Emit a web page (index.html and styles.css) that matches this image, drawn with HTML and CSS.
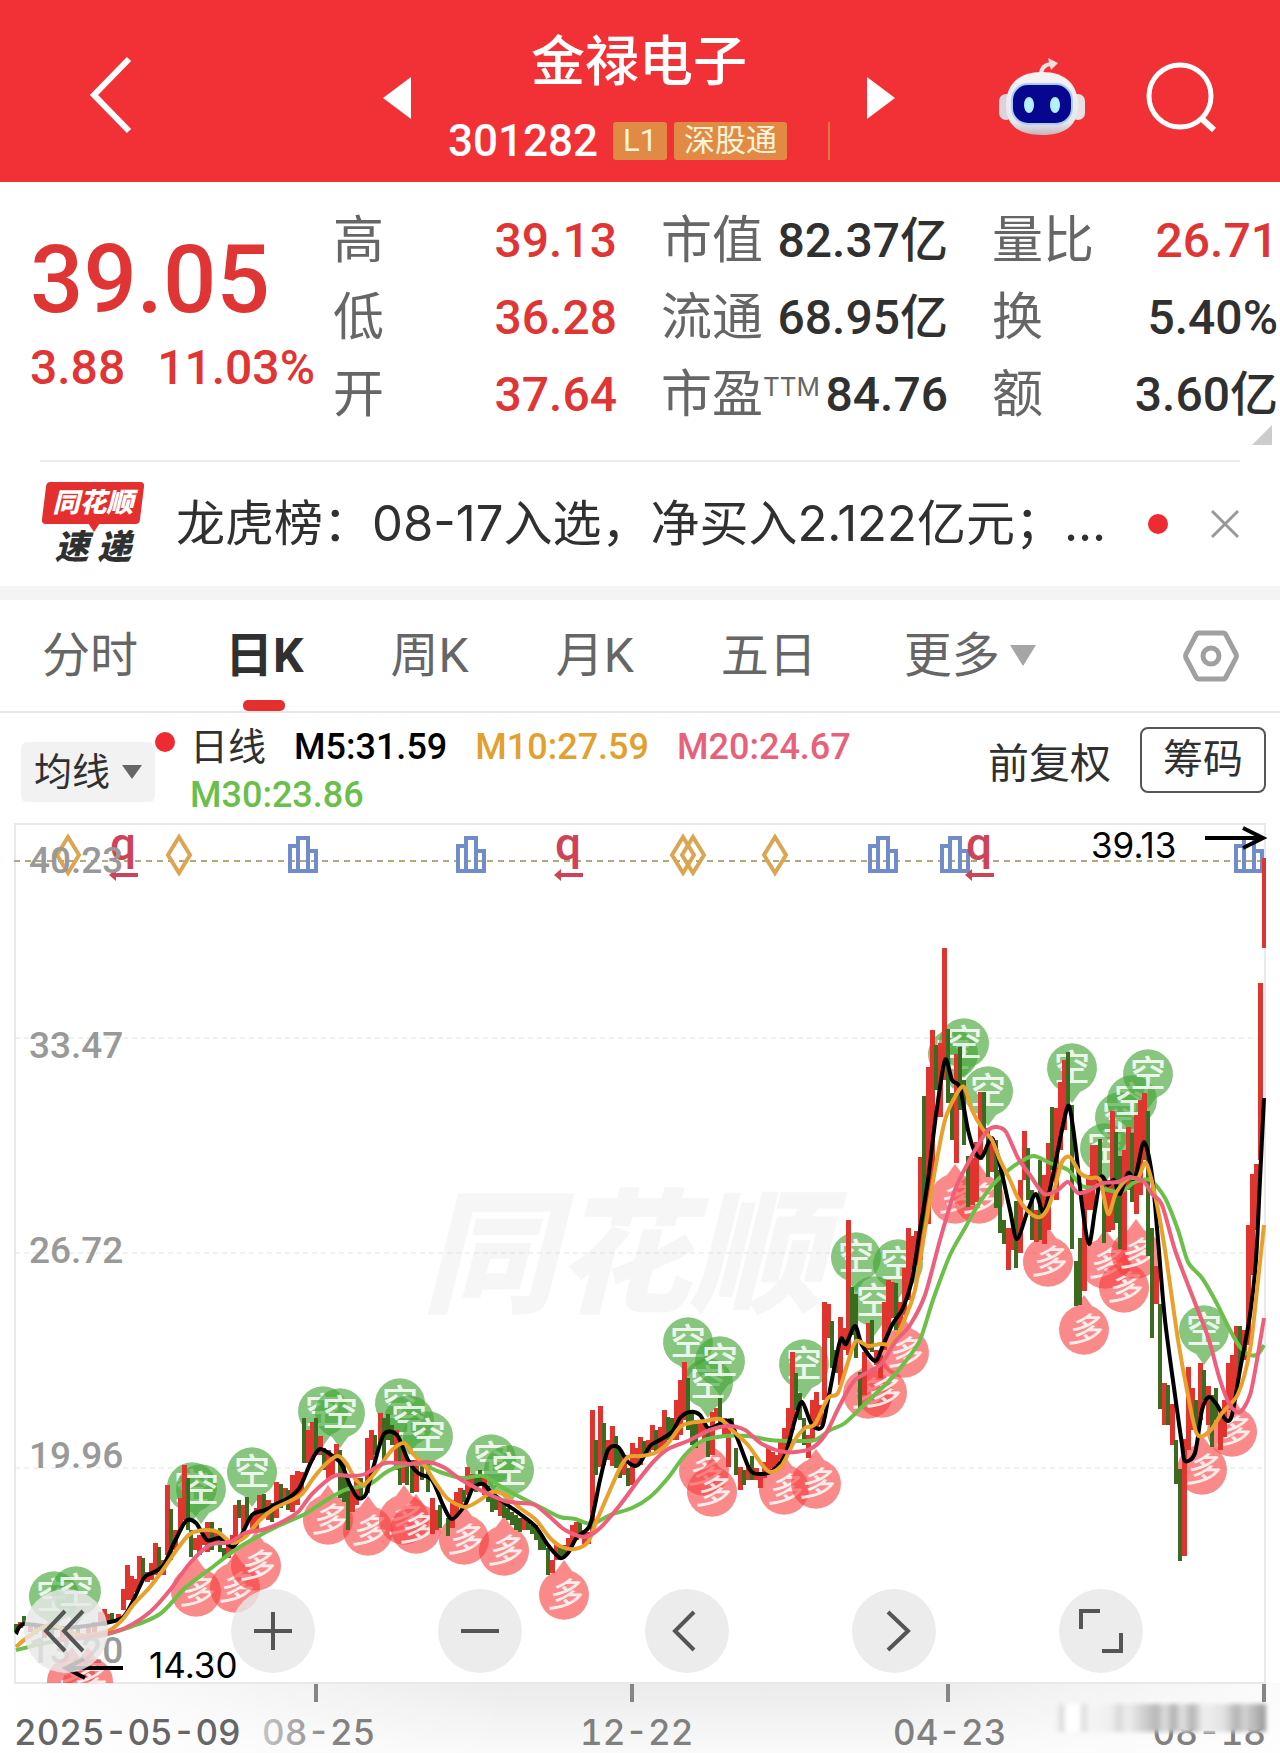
FILE: index.html
```html
<!DOCTYPE html>
<html lang="zh-CN">
<head>
    <meta charset="UTF-8">
    <meta name="viewport" content="width=device-width, initial-scale=1.0">
    <title>金禄电子 301282</title>
    <link rel="stylesheet" href="styles.css">
</head>
<body>

    <header class="top-bar">
        <button type="button" class="icon-btn back" aria-label="返回">
            <svg width="46" height="80" viewBox="0 0 46 80"><path d="M43 4 L8 40 L43 76" fill="none" stroke="#fff" stroke-width="6"/></svg>
        </button>
        <div class="stock">
            <button type="button" class="icon-btn" aria-label="上一只">
                <svg width="28" height="42" viewBox="0 0 28 42"><path d="M28 0 V42 L0 21 Z" fill="#fff"/></svg>
            </button>
            <div class="stock-info">
                <h1>金禄电子</h1>
                <div class="stock-code">
                    <span class="code">301282</span>
                    <span class="tag">L1</span>
                    <span class="tag">深股通</span>
                    <span class="tag-cut"></span>
                </div>
            </div>
            <button type="button" class="icon-btn" aria-label="下一只">
                <svg width="28" height="42" viewBox="0 0 28 42"><path d="M0 0 V42 L28 21 Z" fill="#fff"/></svg>
            </button>
        </div>
        <div class="tools">
            <button type="button" class="icon-btn" aria-label="助手">
                <svg width="88" height="80" viewBox="0 0 88 80">
                    <defs>
                        <linearGradient id="shell" x1="0" y1="0" x2="0" y2="1">
                            <stop offset="0" stop-color="#f6f3f3"/>
                            <stop offset="0.8" stop-color="#e6e8ec"/>
                            <stop offset="1" stop-color="#c4b4bc"/>
                        </linearGradient>
                    </defs>
                    <path d="M43 18 Q43 8 53 7" fill="none" stroke="#f6dede" stroke-width="4"/>
                    <path d="M50 1 L60 6 L53 13 Z" fill="#f6dede"/>
                    <rect x="1" y="37" width="14" height="26" rx="7" fill="#d9d4dc"/>
                    <rect x="73" y="37" width="14" height="26" rx="7" fill="#e9e0e4"/>
                    <path d="M44 15 C68 15 80 28 80 48 C80 68 68 78 44 78 C20 78 8 68 8 48 C8 28 20 15 44 15 Z" fill="url(#shell)"/>
                    <rect x="13" y="26" width="62" height="42" rx="17" fill="#a9cdf6"/>
                    <rect x="15" y="28" width="58" height="38" rx="15" fill="#06068f"/>
                    <ellipse cx="31" cy="48" rx="5" ry="8" fill="#b5f0ff"/>
                    <ellipse cx="57" cy="48" rx="5" ry="8" fill="#b5f0ff"/>
                </svg>
            </button>
            <button type="button" class="icon-btn" aria-label="搜索">
                <svg width="72" height="72" viewBox="0 0 72 72"><g fill="none" stroke="#fff" stroke-width="5"><circle cx="34" cy="35" r="31"/><path d="M55 57 L68 69" stroke-width="6"/></g></svg>
            </button>
        </div>
    </header>

    <section class="quote">
        <div class="price up">
            <div class="price-now">39.05</div>
            <div class="price-change"><span>3.88</span><span>11.03%</span></div>
        </div>
        <dl class="stats">
            <div><dt>高</dt><dd class="up">39.13</dd></div>
            <div><dt>低</dt><dd class="up">36.28</dd></div>
            <div><dt>开</dt><dd class="up">37.64</dd></div>
        </dl>
        <dl class="stats">
            <div><dt>市值</dt><dd>82.37亿</dd></div>
            <div><dt>流通</dt><dd>68.95亿</dd></div>
            <div><dt>市盈<sup>TTM</sup></dt><dd>84.76</dd></div>
        </dl>
        <dl class="stats">
            <div><dt>量比</dt><dd class="up">26.71</dd></div>
            <div><dt>换</dt><dd>5.40%</dd></div>
            <div><dt>额</dt><dd>3.60亿</dd></div>
        </dl>
        <span class="corner"></span>
    </section>

    <section class="news">
        <div class="news-logo">
            <span class="logo-top">同花顺</span>
            <span class="logo-bottom">速 递</span>
        </div>
        <a href="#" class="news-text">龙虎榜：08-17入选，净买入2.122亿元；...</a>
        <span class="dot"></span>
        <button type="button" class="icon-btn" aria-label="关闭">
            <svg width="30" height="30" viewBox="0 0 30 30"><path d="M2 2 L28 28 M28 2 L2 28" stroke="#999" stroke-width="3"/></svg>
        </button>
    </section>

    <nav class="tabs">
        <button type="button">分时</button>
        <button type="button" class="active">日K</button>
        <button type="button">周K</button>
        <button type="button">月K</button>
        <button type="button">五日</button>
        <button type="button" class="more">更多<span class="caret"></span></button>
        <button type="button" class="settings" aria-label="设置">
            <svg width="58" height="54" viewBox="0 0 58 54"><g fill="none" stroke="#a0a0a0" stroke-width="5"><path d="M17 4 H41 Q43 4 44 6 L54 25 Q55 27 54 29 L44 48 Q43 50 41 50 H17 Q15 50 14 48 L4 29 Q3 27 4 25 L14 6 Q15 4 17 4 Z"/><circle cx="29" cy="27" r="8"/></g></svg>
        </button>
    </nav>

    <section class="indicators">
        <button type="button" class="ma-btn">均线<span class="caret dark"></span><span class="dot"></span></button>
        <div class="ma-list">
            <span class="ma-name">日线</span>
            <span class="m5">M5:31.59</span>
            <span class="m10">M10:27.59</span>
            <span class="m20">M20:24.67</span>
            <span class="m30">M30:23.86</span>
        </div>
        <button type="button" class="adjust">前复权</button>
        <button type="button" class="chips">筹码</button>
    </section>

    <main class="chart-box">
        <svg id="chart" viewBox="0 820 1280 933" role="img" aria-label="日K线图">
            <defs>
                <linearGradient id="axisBg" x1="0" y1="0" x2="0" y2="1">
                    <stop offset="0" stop-color="#ebebeb"/>
                    <stop offset="1" stop-color="#fafafa"/>
                </linearGradient>
                <linearGradient id="axisFade" x1="0" y1="0" x2="1" y2="0">
                    <stop offset="0" stop-color="#fff"/>
                    <stop offset="0.4" stop-color="#fff" stop-opacity="0"/>
                    <stop offset="0.7" stop-color="#fff" stop-opacity="0"/>
                    <stop offset="1" stop-color="#fff" stop-opacity="0.8"/>
                </linearGradient>
                <linearGradient id="dateFade" x1="0" y1="0" x2="1" y2="0">
                    <stop offset="0" stop-color="#c4c4c4"/>
                    <stop offset="0.7" stop-color="#808080"/>
                </linearGradient>
                <linearGradient id="smear" x1="0" y1="0" x2="1" y2="0">
                    <stop offset="0" stop-color="#f6f6f6"/>
                    <stop offset="0.03" stop-color="#d8d8d8"/>
                    <stop offset="0.05" stop-color="#fff"/>
                    <stop offset="0.11" stop-color="#fff"/>
                    <stop offset="0.13" stop-color="#dadada"/>
                    <stop offset="0.16" stop-color="#f4f4f4"/>
                    <stop offset="0.26" stop-color="#f0f0f0"/>
                    <stop offset="0.3" stop-color="#d8d8d8"/>
                    <stop offset="0.34" stop-color="#eee"/>
                    <stop offset="0.48" stop-color="#b8b8b8"/>
                    <stop offset="0.52" stop-color="#dedede"/>
                    <stop offset="0.56" stop-color="#b0b0b0"/>
                    <stop offset="0.6" stop-color="#e2e2e2"/>
                    <stop offset="0.65" stop-color="#b4b4b4"/>
                    <stop offset="0.7" stop-color="#efefef"/>
                    <stop offset="0.8" stop-color="#e2e2e2"/>
                    <stop offset="0.86" stop-color="#b4b4b4"/>
                    <stop offset="0.9" stop-color="#d2d2d2"/>
                    <stop offset="1" stop-color="#999"/>
                </linearGradient>
                <filter id="soft"><feGaussianBlur stdDeviation="2"/></filter>
                <clipPath id="plot"><rect x="14" y="824" width="1252" height="859"/></clipPath>
            </defs>

            <text class="watermark" x="422" y="1302">同花顺</text>
            <rect x="0" y="1683" width="1280" height="70" fill="url(#axisBg)"/>
            <rect x="0" y="1683" width="1280" height="70" fill="url(#axisFade)"/>
            <path d="M15 1683 V824 H1265 V1683 Z" fill="none" stroke="#e9e9e9" stroke-width="2"/>
            <path d="M15 1038 H1265 M15 1253 H1265 M15 1468 H1265" stroke="#e2e2e2" stroke-width="1" stroke-dasharray="5 4"/>
            <path d="M14 861 H1265" stroke="#b3a878" stroke-width="2" stroke-dasharray="6 5"/>

            <g id="events"></g>
            <g class="scale">
                <text x="29" y="873">40.23</text>
                <text x="29" y="1058">33.47</text>
                <text x="29" y="1263">26.72</text>
                <text x="29" y="1468">19.96</text>
                <text x="29" y="1663">13.20</text>
            </g>
            <g clip-path="url(#plot)">
                <g id="marks"></g>
                <g id="candles"></g>
                <g id="lines"></g>
            </g>

            <g class="extreme">
                <text x="1091" y="858">39.13</text>
                <path d="M1205 838 H1263 M1243 828 L1263 838 L1243 848"/>
                <text x="149" y="1678">14.30</text>
                <path d="M123 1668 H66 M84 1659 L66 1668 L85 1678"/>
            </g>

            <path d="M316 1684 V1702 M632 1684 V1702 M948 1684 V1702 M1264 1684 V1702" stroke="#858585" stroke-width="4"/>
            <g class="dates">
                <text x="14" y="1745" fill="#666">2025-05-09</text>
                <text x="262" y="1745" fill="url(#dateFade)">08-25</text>
                <text x="580" y="1745">12-22</text>
                <text x="893" y="1745">04-23</text>
                <text x="1266" y="1745" text-anchor="end">08-18</text>
            </g>
            <rect x="1056" y="1704" width="210" height="28" fill="url(#smear)" filter="url(#soft)"/>
        </svg>

        <div class="chart-tools">
            <button type="button" aria-label="最早"><svg viewBox="0 0 84 84"><path d="M41 22 L22 42 L41 62 M59 22 L40 42 L59 62"/></svg></button>
            <button type="button" aria-label="放大"><svg viewBox="0 0 84 84"><path d="M23 42 H61 M42 23 V61"/></svg></button>
            <button type="button" aria-label="缩小"><svg viewBox="0 0 84 84"><path d="M23 42 H61"/></svg></button>
            <button type="button" aria-label="左移"><svg viewBox="0 0 84 84"><path d="M49 23 L30 42 L49 61"/></svg></button>
            <button type="button" aria-label="右移"><svg viewBox="0 0 84 84"><path d="M36 23 L56 42 L36 61"/></svg></button>
            <button type="button" aria-label="全屏"><svg viewBox="0 0 84 84"><path d="M22 40 V22 H41 M62 44 V62 H43"/></svg></button>
        </div>
    </main>

    <script src="chart.js"></script>
</body>
</html>
```
FILE: styles.css
```css
* {
    box-sizing: border-box;
}

body {
    margin: 0;
    background: #fff;
    color: #303030;
    font-family: Roboto, "Noto Sans CJK SC", sans-serif;
}

button {
    margin: 0;
    padding: 0;
    border: none;
    background: none;
    color: inherit;
    font: inherit;
    cursor: pointer;
}

svg {
    display: block;
}

.up {
    color: #e03535;
}

.dot {
    width: 20px;
    height: 20px;
    border-radius: 50%;
    background: #ee2b32;
}

.caret {
    border: 13px solid transparent;
    border-top: 21px solid #a6a6a6;
    border-bottom: none;
}

.caret.dark {
    border-width: 10px;
    border-top: 14px solid #666;
    border-bottom: none;
}

/* top bar */
.top-bar {
    display: grid;
    grid-template-columns: 1fr 512px 1fr;
    align-items: center;
    height: 182px;
    padding: 0 62px 0 86px;
    background: #f23137;
    color: #fff;
}

.back {
    justify-self: start;
    padding-top: 8px;
}

.stock {
    display: flex;
    justify-content: space-between;
    align-items: center;
    margin: 0 13px 0 -13px;
    padding-top: 14px;
}

.stock-info {
    display: flex;
    flex-direction: column;
    align-items: center;
    padding-top: 10px;
}

.stock-info h1 {
    margin: 0;
    font-size: 54px;
    line-height: 76px;
    font-weight: 500;
}

.stock-code {
    display: flex;
    align-items: center;
    gap: 7px;
    height: 80px;
}

.code {
    margin-right: 8px;
    font-size: 44px;
    font-weight: 500;
}

.tag {
    height: 38px;
    padding: 0 10px;
    border-radius: 3px;
    background: #e08a46;
    color: #fff3d8;
    font-size: 31px;
    line-height: 38px;
}

.tag-cut {
    width: 2px;
    height: 38px;
    margin-left: 34px;
    background: #e0763f;
}

.tools {
    display: flex;
    justify-content: flex-end;
    align-items: center;
    gap: 60px;
    padding-top: 12px;
}

/* quote */
.quote {
    position: relative;
    display: grid;
    grid-template-columns: 259px 284px 287px 1fr;
    column-gap: 44px;
    padding: 20px 2px 27px 30px;
}

.price-now {
    margin-top: 20px;
    font-size: 94px;
    line-height: 116px;
    font-weight: 500;
}

.price-change {
    display: flex;
    gap: 32px;
    font-size: 48px;
    line-height: 60px;
    font-weight: 500;
    white-space: nowrap;
}

.stats {
    margin: 0;
    font-size: 48px;
    line-height: 77px;
}

.stats div {
    display: flex;
    justify-content: space-between;
    height: 77px;
    white-space: nowrap;
}

.stats dt {
    color: #666;
    font-size: 51px;
}

.stats sup {
    position: relative;
    top: -16px;
    font-family: Inter, sans-serif;
    font-size: 26px;
    line-height: 0;
    vertical-align: baseline;
}

.stats dd {
    margin: 0;
    font-weight: 500;
}

.corner {
    position: absolute;
    right: 8px;
    bottom: 15px;
    border-left: 20px solid transparent;
    border-bottom: 20px solid #ccc;
}

/* news */
.news {
    display: flex;
    align-items: center;
    height: 126px;
    margin: 0 40px;
    border-top: 2px solid #ececec;
}

.news-logo {
    display: flex;
    flex-direction: column;
    align-items: center;
    width: 106px;
    font-style: italic;
    font-weight: 900;
}

.logo-top {
    position: relative;
    width: 98px;
    height: 42px;
    color: #fff;
    font-size: 27px;
    line-height: 42px;
    text-align: center;
}

.logo-top::before {
    content: "";
    position: absolute;
    inset: 0;
    z-index: -1;
    border-radius: 4px;
    background: #e52f2f;
    transform: skewX(-7deg);
}

.logo-top::after {
    content: "";
    position: absolute;
    left: 44px;
    top: 41px;
    border: 6px solid transparent;
    border-top: 9px solid #e52f2f;
    border-bottom: none;
}

.logo-bottom {
    padding-top: 4px;
    font-size: 34px;
    line-height: 38px;
}

.news-text {
    flex: 1;
    padding-left: 30px;
    overflow: hidden;
    color: #303030;
    font-family: Inter, "Noto Sans CJK SC", sans-serif;
    font-size: 49px;
    line-height: 72px;
    text-decoration: none;
    white-space: nowrap;
}

.news .dot {
    margin-right: 42px;
}

/* tabs */
.tabs {
    display: flex;
    align-items: center;
    gap: 87px;
    padding: 0 40px 0 42px;
    height: 127px;
    border-top: 14px solid #f4f4f4;
    border-bottom: 2px solid #e8e8e8;
    color: #666;
    font-size: 48px;
    white-space: nowrap;
}

.tabs button {
    position: relative;
    line-height: 111px;
}

.tabs .active {
    color: #303030;
    font-weight: 700;
}

.tabs .active::after {
    content: "";
    position: absolute;
    left: calc(50% - 21px);
    bottom: 0;
    width: 42px;
    height: 11px;
    border-radius: 5px;
    background: #e52f2f;
}

.tabs .more {
    display: flex;
    align-items: center;
    gap: 10px;
}

.tabs .settings {
    margin-left: auto;
}

/* moving averages */
.indicators {
    display: flex;
    align-items: flex-start;
    height: 107px;
    padding: 0 14px 0 21px;
}

.ma-btn {
    position: relative;
    display: flex;
    align-items: center;
    justify-content: center;
    gap: 12px;
    width: 134px;
    height: 60px;
    margin-top: 29px;
    border-radius: 6px;
    background: #f2f2f2;
    font-size: 38px;
    line-height: 54px;
}

.ma-btn .dot {
    position: absolute;
    right: -20px;
    top: -10px;
}

.ma-list {
    flex: 1;
    display: flex;
    flex-wrap: wrap;
    column-gap: 28px;
    padding-left: 35px;
    padding-top: 10px;
    font-size: 36px;
    line-height: 48px;
    font-weight: 500;
}

.ma-name {
    font-size: 38px;
    font-weight: 400;
}

.m5 {
    color: #000;
}

.m10 {
    color: #e2a02f;
}

.m20 {
    color: #e8607a;
}

.m30 {
    color: #6abf4b;
}

.adjust {
    height: 66px;
    margin: 18px 29px 0 0;
    font-size: 41px;
    line-height: 66px;
}

.chips {
    width: 126px;
    height: 66px;
    margin-top: 14px;
    border: 2px solid #555;
    border-radius: 8px;
    font-size: 40px;
    line-height: 60px;
}

/* chart */
.chart-box {
    position: relative;
}

#chart {
    width: 100%;
    height: auto;
}

.watermark {
    fill: #f6f6f6;
    font-size: 134px;
    font-style: italic;
    font-weight: 900;
}

.scale text {
    fill: #999;
    font-size: 37px;
    font-weight: 500;
}

.extreme text {
    font-family: Inter, sans-serif;
    font-size: 35px;
}

.extreme path {
    fill: none;
    stroke: #000;
    stroke-width: 4;
}

.dates {
    fill: #808080;
}

.dates text {
    font-family: Inter, sans-serif;
    font-size: 35px;
    font-weight: 500;
    font-variant-numeric: tabular-nums;
}

.mark text {
    fill: #fff;
    fill-opacity: 0.85;
    font-size: 36px;
    font-weight: 500;
    text-anchor: middle;
}

.mark.short {
    fill: #43a535;
    fill-opacity: 0.63;
}

.mark.long {
    fill: #f73c3c;
    fill-opacity: 0.6;
}

.mark.long text {
    font-size: 34px;
    font-style: italic;
}

.event {
    fill: none;
    stroke-width: 4;
}

.event-q {
    fill: #cf4358;
    font-size: 46px;
    font-weight: 500;
    text-anchor: middle;
}

.chart-tools {
    position: absolute;
    left: 24px;
    right: 137px;
    bottom: 80px;
    display: flex;
    justify-content: space-between;
}

.chart-tools button {
    width: 84px;
    height: 84px;
    border-radius: 50%;
    background: rgba(232, 232, 232, 0.82);
}

.chart-tools path {
    fill: none;
    stroke: #555;
    stroke-width: 4;
}
```
FILE: chart.js
```js
const svgNS = 'http://www.w3.org/2000/svg';

function add(parent, tag, attrs, text) {
    const el = document.createElementNS(svgNS, tag);
    for (const key in attrs) {
        el.setAttribute(key, attrs[key]);
    }
    if (text) {
        el.textContent = text;
    }
    parent.appendChild(el);
    return el;
}

// r = up, g = down; then x, high, low
const candles = `
g16,1624,1632 r20,1622,1628 g24,1616,1626 r30,1624,1632 g36,1626,1634 r44,1628,1638 g52,1626,1636 r62,1630,1640 r70,1630,1638 g78,1628,1638
r88,1626,1636 r94,1622,1634 r100,1612,1622 r104,1609,1626 r108,1614,1624 g112,1613,1621 r118,1614,1622 r123,1589,1610 r127,1565,1600
r131,1576,1600 r135,1579,1592 r139,1556,1585 g143,1558,1580 r147,1572,1582 r151,1563,1580 r155,1543,1575 g159,1547,1568 r163,1560,1575
r167,1485,1555 g171,1509,1560 r175,1530,1550 r180,1498,1530 r184,1465,1520 g188,1478,1530 g191,1530,1557 r195,1538,1550 r199,1535,1555
r203,1530,1545 r207,1522,1552 g212,1522,1550 r216,1530,1545 g220,1528,1552 g224,1548,1557 r228,1545,1558 r232,1535,1552 r235,1505,1545
g239,1500,1518 r243,1505,1530 g247,1497,1522 r252,1515,1528 r256,1508,1530 r259,1495,1518 g264,1494,1515 r268,1500,1520 g272,1503,1522
r276,1482,1518 g281,1484,1508 r285,1488,1505 g288,1490,1510 r292,1475,1512 r297,1471,1505 r301,1472,1495 g304,1418,1463 r308,1430,1463
r312,1422,1460 g316,1418,1455 r320,1436,1455 g324,1448,1470 r328,1450,1480 r332,1455,1475 r336,1444,1460 g340,1450,1498 g344,1460,1502
g348,1480,1530 r352,1490,1512 r356,1478,1505 g361,1478,1498 r367,1438,1493 r371,1430,1460 g375,1435,1455 r380,1413,1445 g384,1418,1460
g388,1414,1440 g392,1425,1445 r396,1430,1470 g400,1442,1485 r403,1450,1483 g407,1465,1485 g412,1460,1493 r416,1460,1492 g422,1464,1480
g428,1464,1492 r432,1498,1534 r436,1510,1530 g440,1505,1528 g448,1518,1536 r452,1500,1528 r456,1492,1515 r460,1488,1505 g464,1490,1502
r467,1467,1495 r472,1474,1490 g476,1478,1492 g480,1470,1485 r484,1476,1495 g488,1486,1502 g492,1493,1512 g496,1498,1510 r500,1500,1516
g504,1504,1518 g508,1508,1520 g512,1512,1525 g516,1515,1530 g520,1518,1532 r524,1518,1530 g528,1522,1530 g532,1525,1534 g536,1525,1540
g540,1532,1550 g544,1540,1550 g548,1548,1575 r552,1560,1573 r556,1543,1560 g560,1548,1560 g564,1545,1558 r568,1538,1552 r572,1525,1545
r576,1522,1540 g580,1522,1535 r584,1530,1545 r588,1532,1544 r592,1410,1535 g596,1440,1475 r600,1406,1467 g604,1423,1465 r608,1440,1460
r612,1426,1466 g616,1436,1468 g620,1450,1478 r624,1455,1475 g628,1468,1486 r632,1443,1485 r636,1448,1465 r640,1437,1465 g644,1441,1455
r648,1440,1455 r652,1425,1450 g656,1430,1452 r660,1427,1450 r664,1410,1445 g668,1417,1440 g672,1418,1440 r676,1400,1440 r680,1380,1435
r684,1362,1420 g688,1378,1430 g692,1410,1445 g696,1420,1448 r700,1420,1435 r704,1425,1440 g708,1430,1457 r712,1412,1455 r716,1408,1420
g720,1398,1425 r724,1418,1435 r728,1420,1467 g732,1418,1430 g736,1448,1475 r740,1467,1490 g744,1470,1485 r748,1465,1480 g752,1456,1480
r756,1468,1480 r760,1472,1488 r764,1462,1478 r768,1448,1470 r772,1452,1468 r776,1455,1465 r780,1440,1460 r784,1428,1455 r788,1408,1440
r792,1352,1430 g796,1373,1410 g800,1393,1420 g804,1418,1445 r808,1435,1458 r812,1400,1440 r816,1392,1430 r820,1405,1425 r824,1302,1400
r828,1304,1338 g832,1321,1368 g836,1350,1373 r840,1317,1385 r844,1328,1350 r848,1220,1355 g852,1287,1335 g856,1294,1358 g860,1372,1410
r864,1352,1395 r868,1323,1350 g872,1320,1352 r876,1350,1365 r880,1355,1378 r884,1302,1350 r888,1280,1330 r892,1282,1318 g896,1283,1330
r900,1302,1328 r904,1268,1315 r908,1228,1300 r912,1236,1270 r916,1231,1265 r920,1157,1260 g924,1096,1230 r928,1067,1224 r932,1030,1180
g936,1045,1090 r940,1043,1117 r944,948,1080 g948,1029,1103 g952,1093,1140 r956,1054,1163 g960,1047,1110 g964,1080,1145 g968,1156,1207
r972,1158,1205 r976,1142,1202 r980,1092,1160 g984,1092,1130 g988,1128,1177 r992,1138,1172 g996,1140,1208 g1000,1170,1233 g1004,1220,1244
r1008,1228,1270 r1012,1228,1250 g1016,1201,1268 r1020,1180,1253 r1024,1131,1180 g1028,1148,1200 g1032,1190,1240 r1036,1210,1242
g1040,1160,1240 r1044,1175,1244 r1048,1143,1230 g1052,1107,1170 r1056,1108,1200 r1060,1082,1150 r1064,1060,1130 g1068,1052,1105
g1072,1105,1249 g1076,1261,1306 g1080,1238,1305 r1084,1190,1291 r1088,1175,1210 r1092,1145,1210 r1096,1145,1190 g1100,1139,1185
g1104,1180,1243 r1108,1180,1232 r1112,1111,1230 g1116,1132,1223 g1120,1156,1249 r1124,1150,1250 r1128,1127,1190 g1132,1133,1202
r1136,1115,1214 r1140,1100,1195 r1144,1093,1160 g1148,1111,1256 g1152,1228,1338 r1156,1266,1304 g1160,1304,1409 r1164,1383,1425
g1168,1385,1425 r1172,1404,1445 g1176,1440,1484 g1180,1469,1561 r1184,1439,1556 r1188,1367,1450 r1192,1388,1430 g1196,1400,1430
r1200,1363,1420 g1204,1370,1400 r1208,1386,1425 g1212,1395,1447 g1216,1388,1420 r1220,1415,1450 r1224,1400,1437 r1228,1363,1410
r1232,1355,1400 r1236,1326,1390 g1240,1326,1370 r1244,1330,1360 r1248,1225,1345 r1252,1174,1275 r1256,1164,1230 r1260,983,1160 r1264,858,948`;

const averages = [
    ['#6cc04a', '16,1650 60,1640 95,1637 130,1627 160,1614 185,1588 210,1569 235,1550 255,1538 278,1526 305,1514 325,1501 345,1490 370,1484 385,1473 400,1466 420,1464 440,1472 462,1478 483,1476 500,1486 520,1497 540,1507 560,1517 575,1519 592,1524 610,1515 632,1508 650,1497 668,1478 685,1455 702,1441 725,1436 748,1436 770,1440 795,1441 815,1440 830,1430 845,1423 865,1404 890,1380 905,1362 920,1340 933,1300 950,1255 965,1228 975,1210 990,1188 1005,1173 1020,1162 1034,1156 1050,1163 1068,1170 1082,1186 1100,1188 1120,1192 1135,1182 1150,1180 1165,1198 1178,1230 1188,1262 1202,1278 1215,1300 1230,1330 1240,1347 1250,1355 1258,1354 1264,1345'],
    ['#000', '16,1634 24,1624 60,1628 100,1624 122,1618 132,1603 144,1578 152,1573 163,1566 175,1541 186,1521 196,1523 207,1540 220,1538 232,1547 240,1538 252,1515 265,1510 278,1503 290,1497 300,1487 311,1462 320,1449 334,1457 342,1465 350,1485 358,1498 366,1494 374,1465 384,1434 397,1435 408,1460 418,1473 432,1480 443,1505 452,1519 465,1505 473,1488 483,1484 492,1493 506,1504 520,1514 536,1527 548,1545 560,1558 568,1553 577,1537 590,1525 600,1480 608,1450 618,1447 628,1462 638,1465 650,1446 658,1441 672,1432 680,1418 690,1412 700,1415 708,1428 718,1425 730,1421 738,1440 750,1470 760,1474 772,1471 785,1455 795,1420 802,1402 812,1425 822,1427 828,1400 840,1341 846,1344 855,1326 862,1345 875,1361 882,1348 892,1325 903,1308 912,1280 920,1230 928,1180 936,1115 945,1060 952,1080 960,1088 968,1130 975,1152 982,1157 992,1138 1000,1165 1010,1210 1017,1239 1028,1210 1036,1194 1044,1212 1054,1170 1062,1130 1069,1106 1076,1150 1082,1205 1089,1244 1095,1210 1101,1177 1108,1185 1114,1180 1120,1194 1128,1173 1135,1178 1144,1142 1152,1175 1158,1240 1165,1320 1175,1395 1182,1445 1185,1461 1195,1453 1202,1410 1209,1397 1217,1405 1226,1420 1232,1415 1240,1370 1250,1315 1256,1260 1260,1180 1264,1098'],
    ['#e9a02c', '16,1647 28,1637 50,1625 80,1635 108,1631 122,1620 134,1604 150,1587 165,1567 178,1548 190,1534 205,1530 218,1532 232,1543 245,1537 260,1520 275,1508 290,1501 302,1494 315,1476 328,1462 338,1456 346,1463 356,1480 365,1484 380,1466 392,1450 404,1443 414,1455 425,1466 435,1482 448,1499 465,1507 480,1500 492,1492 505,1495 520,1508 536,1520 550,1538 562,1547 575,1549 588,1542 597,1520 610,1490 620,1468 628,1457 640,1456 655,1453 668,1443 680,1427 690,1423 705,1421 720,1419 732,1430 748,1445 760,1462 770,1472 782,1465 795,1440 805,1428 815,1424 828,1398 838,1393 848,1362 856,1341 868,1346 880,1344 892,1343 903,1323 915,1290 925,1230 935,1170 945,1120 956,1095 964,1087 972,1110 982,1128 992,1140 1000,1160 1010,1180 1018,1198 1030,1213 1040,1217 1048,1208 1055,1187 1062,1162 1070,1157 1080,1173 1090,1178 1100,1180 1108,1214 1116,1193 1128,1178 1138,1178 1146,1163 1155,1195 1165,1250 1178,1340 1187,1390 1197,1434 1210,1431 1222,1413 1238,1394 1250,1350 1257,1290 1264,1225'],
    ['#ee5f7b', '60,1640 100,1635 125,1628 150,1612 170,1590 190,1563 210,1545 230,1542 245,1533 262,1530 280,1523 298,1512 312,1494 334,1476 350,1476 365,1474 385,1463 410,1464 428,1462 445,1468 460,1479 480,1490 505,1501 522,1503 535,1505 550,1517 565,1530 585,1537 600,1528 620,1505 640,1478 655,1460 668,1449 690,1440 710,1430 728,1426 745,1430 762,1444 785,1452 810,1449 825,1435 840,1405 855,1380 880,1365 895,1342 910,1325 925,1295 940,1240 955,1190 968,1163 978,1145 988,1130 997,1127 1006,1132 1018,1158 1030,1175 1044,1194 1058,1190 1068,1182 1078,1193 1090,1190 1102,1183 1118,1182 1130,1177 1144,1182 1152,1194 1162,1205 1175,1250 1190,1290 1208,1337 1220,1380 1230,1405 1240,1412 1250,1395 1257,1360 1264,1318']
];

const shorts = [[54, 1596], [76, 1591], [192, 1487], [201, 1489], [252, 1472], [323, 1411], [340, 1413], [400, 1403], [409, 1420],
    [428, 1436], [491, 1459], [509, 1470], [688, 1342], [708, 1383], [720, 1361], [804, 1364], [856, 1257], [898, 1264], [874, 1301],
    [953, 1054], [964, 1043], [988, 1091], [1072, 1068], [1105, 1148], [1120, 1117], [1132, 1100], [1148, 1074], [1204, 1330]];

const longs = [[72, 1682], [88, 1682], [196, 1592], [235, 1588], [256, 1566], [328, 1520], [368, 1531], [404, 1520], [416, 1529],
    [464, 1540], [504, 1551], [564, 1595], [704, 1471], [712, 1492], [784, 1490], [816, 1484], [868, 1394], [882, 1393], [904, 1353],
    [955, 1199], [979, 1199], [1048, 1262], [1084, 1330], [1105, 1264], [1124, 1288], [1136, 1254], [1202, 1470], [1232, 1432]];

function drawCandles() {
    const group = document.getElementById('candles');
    candles.trim().split(/\s+/).forEach(item => {
        const [x, high, low] = item.slice(1).split(',').map(Number);
        add(group, 'rect', {
            x: x - 2,
            y: high,
            width: item[0] === 'r' ? 5 : 4,
            height: low - high,
            fill: item[0] === 'r' ? '#e0352f' : '#3a6b1e'
        });
    });
}

function drawLines() {
    const group = document.getElementById('lines');
    averages.forEach(([color, data]) => {
        const p = data.split(' ').map(s => s.split(',').map(Number));
        let d = 'M' + p[0];
        // curve through every point
        for (let i = 0; i < p.length - 1; i++) {
            const a = p[i - 1] || p[i];
            const b = p[i];
            const c = p[i + 1];
            const e = p[i + 2] || c;
            d += ` C${b[0] + (c[0] - a[0]) / 7},${b[1] + (c[1] - a[1]) / 7} ${c[0] - (e[0] - b[0]) / 7},${c[1] - (e[1] - b[1]) / 7} ${c}`;
        }
        add(group, 'path', { d: d, fill: 'none', stroke: color, 'stroke-width': 4 });
    });
}

function drawMarks() {
    const group = document.getElementById('marks');
    longs.forEach(([x, y]) => {
        const g = add(group, 'g', { class: 'mark long' });
        add(g, 'path', { d: `M${x} ${y - 35} L${x + 8} ${y - 24} A25 25 0 1 1 ${x - 8} ${y - 24} Z` });
        add(g, 'text', { x: x, y: y + 12 }, '多');
    });
    shorts.forEach(([x, y]) => {
        const g = add(group, 'g', { class: 'mark short' });
        add(g, 'path', { d: `M${x} ${y + 35} L${x - 8} ${y + 24} A25 25 0 1 1 ${x + 8} ${y + 24} Z` });
        add(g, 'text', { x: x, y: y + 13 }, '空');
    });
}

function drawEvents() {
    const group = document.getElementById('events');
    [68, 179, 683, 693, 775].forEach(x => {
        add(group, 'path', { class: 'event', stroke: '#dba552', d: `M${x} 837 L${x + 11} 855 L${x} 873 L${x - 11} 855 Z` });
    });
    [303, 471, 883, 955, 1249].forEach(x => {
        add(group, 'path', { class: 'event', stroke: '#718ccb', d: `M${x - 13} 871 V846 H${x - 5} M${x - 5} 871 V838 H${x + 5} V871 M${x + 5} 851 H${x + 13} V871 H${x - 15}` });
    });
    [123, 568, 979].forEach(x => {
        add(group, 'text', { class: 'event-q', x: x, y: 860 }, 'q');
        add(group, 'path', { d: `M${x + 15} 873 H${x - 7} V869 L${x - 14} 875 L${x - 7} 881 V877 H${x + 15} Z`, fill: '#cf4358' });
    });
}

drawEvents();
drawMarks();
drawCandles();
drawLines();
```
